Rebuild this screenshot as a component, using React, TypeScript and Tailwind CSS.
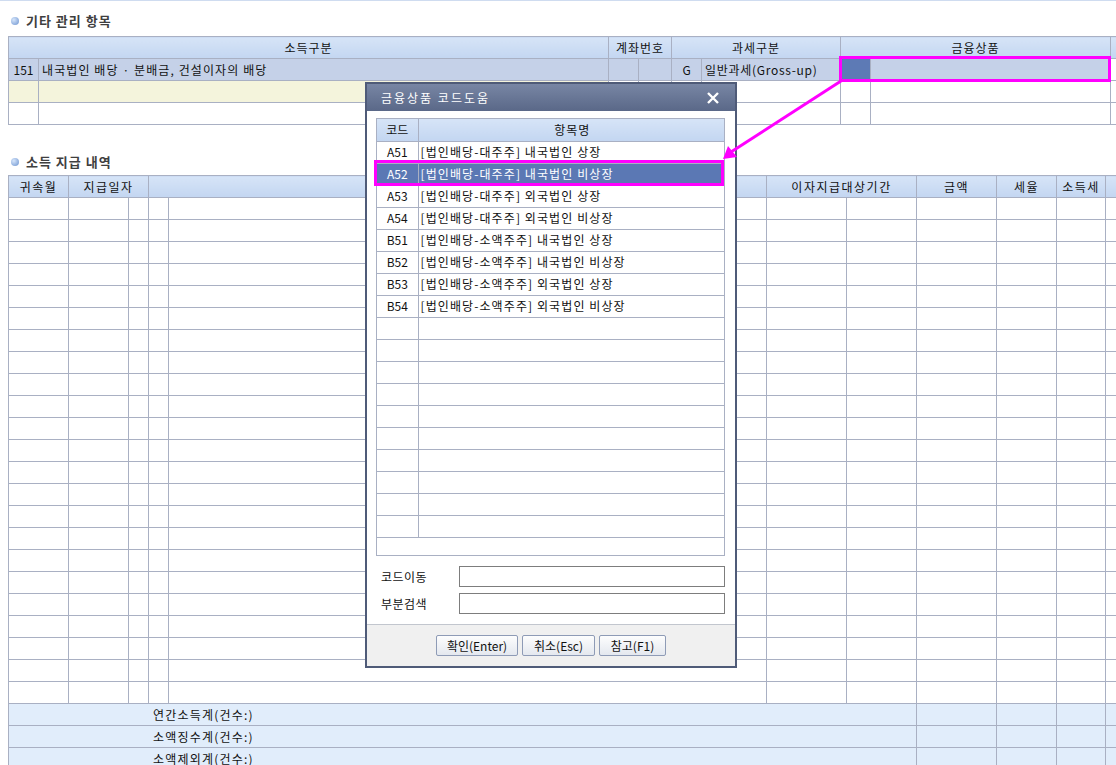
import React from 'react';

const FONT = { fontFamily: '"Noto Sans CJK KR", "Noto Sans", sans-serif' };

const codes = [
  ['A51', '[법인배당-대주주] 내국법인 상장'],
  ['A52', '[법인배당-대주주] 내국법인 비상장'],
  ['A53', '[법인배당-대주주] 외국법인 상장'],
  ['A54', '[법인배당-대주주] 외국법인 비상장'],
  ['B51', '[법인배당-소액주주] 내국법인 상장'],
  ['B52', '[법인배당-소액주주] 내국법인 비상장'],
  ['B53', '[법인배당-소액주주] 외국법인 상장'],
  ['B54', '[법인배당-소액주주] 외국법인 비상장'],
];

const th = 'border border-[#a9b0c3] bg-gradient-to-b from-[#d6e4f7] to-[#c3d6f1] font-normal text-center p-0';
const td = 'border border-[#a9b0c3] p-0';

function SectionTitle({ text }: { text: string }) {
  return (
    <div className="flex items-center gap-[7px] pl-[11px] h-[20px]">
      <span className="w-[8px] h-[8px] rounded-full bg-[radial-gradient(circle_at_35%_35%,#d6e6fb,#6b92cf)]" />
      <span className="text-[13px] font-bold text-[#3f3f3f] tracking-[1px]">{text}</span>
    </div>
  );
}

function CodeDialog() {
  const empty = Array.from({ length: 10 });
  return (
    <div className="absolute left-[365px] top-[82px] w-[372px] h-[586px] border-2 border-[#4f5b78] bg-white flex flex-col">
      <div className="h-[27px] shrink-0 bg-gradient-to-b from-[#7886a4] to-[#5a6888] flex items-center justify-between pl-[14px] pr-[16px]">
        <span className="text-white text-[12px] tracking-[2px]">금융상품 코드도움</span>
        <svg width="12" height="12" viewBox="0 0 12 12">
          <path d="M1 1 L11 11 M11 1 L1 11" stroke="white" strokeWidth="2.4" />
        </svg>
      </div>
      <div className="relative flex-1 flex flex-col px-[9px] pt-[7px]">
        <div className="h-[438px] w-[349px] border border-[#a9b0c3] overflow-hidden">
          <table className="border-collapse table-fixed w-[349px] text-[12px] text-[#111]">
            <colgroup>
              <col className="w-[41px]" />
              <col />
            </colgroup>
            <tbody>
              <tr className="h-[22px]">
                <th className={th + ' border-t-0 border-l-0'}>코드</th>
                <th className={th + ' border-t-0 border-r-0 tracking-[1px]'}>항목명</th>
              </tr>
              {codes.map(([c, n], i) => (
                <tr key={c} className={i === 1 ? 'h-[22px] bg-[#5b78b4] text-white' : 'h-[22px]'}>
                  <td className={td + ' border-l-0 text-center'}>{c}</td>
                  <td className={td + ' border-r-0 pl-[2px] tracking-[1.1px]'}>{n}</td>
                </tr>
              ))}
              {empty.map((_, i) => (
                <tr key={i} className="h-[22px]">
                  <td className={td + ' border-l-0'} />
                  <td className={td + ' border-r-0'} />
                </tr>
              ))}
            </tbody>
          </table>
        </div>
        <div className="absolute left-[7px] top-[49px] w-[350px] h-[26px] border-[3px] border-[#ff00ff]" />
        <div className="flex items-center mt-[10px] h-[21px] text-[12px] text-[#111] tracking-[0.5px]">
          <span className="w-[83px] pl-[5px]">코드이동</span>
          <div className="flex-1 h-[21px] border border-[#7d7d7d] mr-[1px]" />
        </div>
        <div className="flex items-center mt-[6px] h-[21px] text-[12px] text-[#111] tracking-[0.5px]">
          <span className="w-[83px] pl-[5px]">부분검색</span>
          <div className="flex-1 h-[21px] border border-[#7d7d7d] mr-[1px]" />
        </div>
        <div className="flex-1" />
      </div>
      <div className="h-[42px] shrink-0 border-t border-[#c2c6ce] bg-[#f0f0f0] flex items-center justify-center gap-[4px]">
        {['확인(Enter)', '취소(Esc)', '참고(F1)'].map((b, i) => (
          <button
            key={b}
            className={`h-[21px] border border-[#8e9bb6] rounded-[2px] bg-gradient-to-b from-[#fdfdfd] to-[#e4e8ef] text-[12px] text-[#111] ${i === 0 ? 'w-[82px]' : i === 1 ? 'w-[73px]' : 'w-[67px]'}`}
          >
            {b}
          </button>
        ))}
      </div>
    </div>
  );
}

export default function App() {
  const bodyRows = Array.from({ length: 23 });
  const sums = ['연간소득계(건수:)', '소액징수계(건수:)', '소액제외계(건수:)'];
  return (
    <div className="relative w-[1116px] h-[765px] overflow-hidden bg-white text-[#111]" style={FONT}>
      <div className="h-[1px] bg-[#cfdcf0]" />
      <div className="pt-[10px]">
        <SectionTitle text="기타 관리 항목" />
      </div>
      <div className="pl-[8px] pt-[5px]">
        <table className="border-collapse table-fixed w-[1160px] text-[12px]">
          <colgroup>
            <col className="w-[30px]" />
            <col className="w-[570px]" />
            <col className="w-[30px]" />
            <col className="w-[33px]" />
            <col className="w-[30px]" />
            <col className="w-[139px]" />
            <col className="w-[30px]" />
            <col className="w-[240px]" />
            <col className="w-[58px]" />
          </colgroup>
          <tbody>
            <tr className="h-[22px]">
              <th className={th + ' tracking-[1px]'} colSpan={2}>소득구분</th>
              <th className={th + ' tracking-[1px]'} colSpan={2}>계좌번호</th>
              <th className={th + ' tracking-[1px]'} colSpan={2}>과세구분</th>
              <th className={th + ' tracking-[1px]'} colSpan={2}>금융상품</th>
              <th className={th} />
            </tr>
            <tr className="h-[22px] bg-[#c5d1e8]">
              <td className={td + ' text-center'}>151</td>
              <td className={td + ' pl-[3px] tracking-[1.1px]'}>내국법인 배당 · 분배금, 건설이자의 배당</td>
              <td className={td} />
              <td className={td} />
              <td className={td + ' text-center'}>G</td>
              <td className={td + ' pl-[3px] tracking-[0.7px]'}>일반과세(Gross-up)</td>
              <td className={td + ' bg-[#5d7ab5]'} />
              <td className={td} />
              <td className={td + ' bg-white'} />
            </tr>
            <tr className="h-[22px]">
              <td className={td + ' bg-[#f4f4dc]'} />
              <td className={td + ' bg-[#f4f4dc]'} />
              <td className={td} />
              <td className={td} />
              <td className={td} />
              <td className={td} />
              <td className={td} />
              <td className={td} />
              <td className={td} />
            </tr>
            <tr className="h-[22px]">
              {Array.from({ length: 9 }).map((_, i) => (
                <td key={i} className={td} />
              ))}
            </tr>
          </tbody>
        </table>
      </div>
      <div className="pt-[27px]">
        <SectionTitle text="소득 지급 내역" />
      </div>
      <div className="pl-[8px] pt-[3px]">
        <table className="border-collapse table-fixed w-[1157px] text-[12px]">
          <colgroup>
            <col className="w-[60px]" />
            <col className="w-[60px]" />
            <col className="w-[20px]" />
            <col className="w-[20px]" />
            <col className="w-[598px]" />
            <col className="w-[80px]" />
            <col className="w-[70px]" />
            <col className="w-[80px]" />
            <col className="w-[60px]" />
            <col className="w-[49px]" />
            <col className="w-[60px]" />
          </colgroup>
          <tbody>
            <tr className="h-[22px]">
              <th className={th + ' tracking-[1.5px]'}>귀속월</th>
              <th className={th + ' tracking-[1.5px]'} colSpan={2}>지급일자</th>
              <th className={th} colSpan={2} />
              <th className={th + ' tracking-[1.5px]'} colSpan={2}>이자지급대상기간</th>
              <th className={th + ' tracking-[1.5px]'}>금액</th>
              <th className={th + ' tracking-[1.5px]'}>세율</th>
              <th className={th + ' tracking-[1.5px]'}>소득세</th>
              <th className={th} />
            </tr>
            {bodyRows.map((_, r) => (
              <tr key={r} className="h-[22px]">
                {Array.from({ length: 11 }).map((_, i) => (
                  <td key={i} className={td + (i === 4 ? ' border-r-0' : '')} />
                ))}
              </tr>
            ))}
            {sums.map((s) => (
              <tr key={s} className="h-[22px] bg-[#e1edfb]">
                <td className={td + ' pl-[144px] tracking-[1.2px] leading-[20px]'} colSpan={7}>{s}</td>
                <td className={td} />
                <td className={td} />
                <td className={td} />
                <td className={td} />
              </tr>
            ))}
          </tbody>
        </table>
      </div>

      <div className="absolute left-[839px] top-[56px] w-[272px] h-[26px] border-[3px] border-[#ff00ff]" />
      <CodeDialog />
      <svg className="absolute left-0 top-0 pointer-events-none" width="1116" height="765">
        <line x1="841" y1="81" x2="731" y2="152" stroke="#ff00ff" strokeWidth="3" />
        <polygon points="723,159 728,146 737,157" fill="#ff00ff" />
      </svg>
    </div>
  );
}
